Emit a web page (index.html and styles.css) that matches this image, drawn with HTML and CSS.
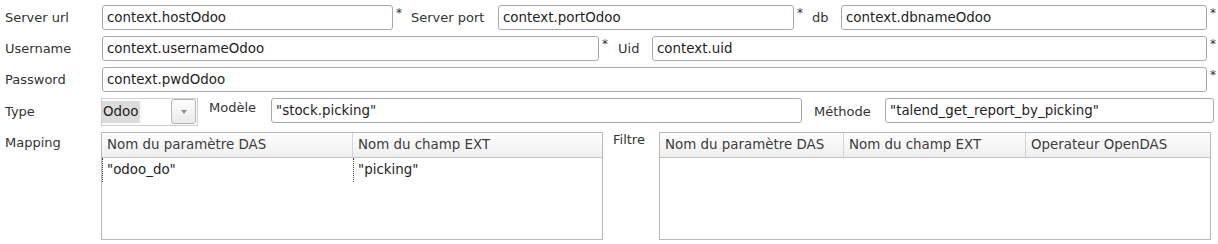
FILE: index.html
```html
<!DOCTYPE html>
<html lang="fr">
	<head>
		<meta charset="UTF-8">
		<title>Odoo connection</title>
		<link rel="stylesheet" href="styles.css">
	</head>
	<body>
		<section class="form">
			<div class="row">
				<span class="label label--first">Server url</span>
				<span class="field w-url">context.hostOdoo</span>
				<span class="req">*</span>
				<span class="label label--port">Server port</span>
				<span class="field w-port">context.portOdoo</span>
				<span class="req">*</span>
				<span class="label label--db">db</span>
				<span class="field w-db">context.dbnameOdoo</span>
				<span class="req">*</span>
			</div>
			<div class="row">
				<span class="label label--first">Username</span>
				<span class="field w-user">context.usernameOdoo</span>
				<span class="req">*</span>
				<span class="label label--uid">Uid</span>
				<span class="field w-uid">context.uid</span>
				<span class="req">*</span>
			</div>
			<div class="row">
				<span class="label label--first">Password</span>
				<span class="field w-pwd">context.pwdOdoo</span>
				<span class="req">*</span>
			</div>
			<div class="row row--type">
				<span class="label label--first">Type</span>
				<div class="combo">
					<span class="combo__value">Odoo</span>
					<span class="combo__btn"><span class="combo__arrow"></span></span>
				</div>
				<span class="label label--model">Modèle</span>
				<span class="field w-model">"stock.picking"</span>
				<span class="label label--method">Méthode</span>
				<span class="field w-method">"talend_get_report_by_picking"</span>
			</div>
			<div class="row row--tables">
				<span class="label label--first label--mapping">Mapping</span>
				<div class="table w-map">
					<div class="table__head">
						<span class="cell c-das">Nom du paramètre DAS</span>
						<span class="cell c-ext">Nom du champ EXT</span>
					</div>
					<div class="table__row">
						<span class="cell c-das dotted">"odoo_do"</span>
						<span class="cell c-ext dotted">"picking"</span>
					</div>
				</div>
				<span class="label label--filter">Filtre</span>
				<div class="table w-filter">
					<div class="table__head">
						<span class="cell f-das">Nom du paramètre DAS</span>
						<span class="cell f-ext">Nom du champ EXT</span>
						<span class="cell f-op">Operateur OpenDAS</span>
					</div>
				</div>
			</div>
		</section>
	</body>
</html>
```

FILE: styles.css
```css
body
{
	margin: 0;
	background: #fff;
	font-family: 'DejaVu Sans', 'Open Sans', sans-serif;
	font-size: 13.4px;
	color: #3c3c3c;
}

.form
{
	padding-top: 5px;
}

.row
{
	display: flex;
	align-items: center;
	height: 25px;
	margin-bottom: 6px;
}

.row > *
{
	flex-shrink: 0;
}

.row--type
{
	height: 29px;
	margin-top: -1px;
	margin-bottom: 6px;
}

.row--tables
{
	align-items: flex-start;
	height: auto;
	margin-top: 1px;
}

.label
{
	white-space: nowrap;
	font-size: 13px;
	color: #333;
}

.label--first
{
	width: 97px;
	padding-left: 5px;
}

.label--mapping
{
	margin-top: 3px;
}

.label--port
{
	margin-left: 6px;
	width: 87px;
}

.label--db
{
	margin-left: 6px;
	width: 29px;
}

.label--uid
{
	margin-left: 7px;
	width: 34px;
}

.label--model
{
	margin-left: 11px;
	width: 62px;
	align-self: flex-start;
	margin-top: 3px;
}

.label--method
{
	margin-left: 12px;
	width: 71px;
}

.label--filter
{
	margin-left: 10px;
	width: 46px;
	margin-top: 0;
}

.field
{
	box-sizing: border-box;
	height: 25px;
	line-height: 23px;
	padding-left: 4px;
	border: 1px solid #a9a9a9;
	border-radius: 3px;
	color: #1e1e1e;
	white-space: nowrap;
	overflow: hidden;
}

.req
{
	width: 12px;
	padding-left: 3px;
	box-sizing: border-box;
	font-size: 12px;
	color: #333;
	align-self: flex-start;
	margin-top: 1px;
}

.w-url { width: 291px; }
.w-port { width: 296px; }
.w-db { width: 366px; }
.w-user { width: 497px; }
.w-uid { width: 555px; }
.w-pwd { width: 1105px; }

.w-model,
.w-method
{
	align-self: flex-start;
	margin-top: 1px;
}

.w-model { width: 531px; }
.w-method { width: 329px; }

.combo
{
	box-sizing: border-box;
	width: 97px;
	height: 28px;
	margin-left: -1px;
	border: 1px solid #d0d0d0;
	display: flex;
	align-items: center;
	justify-content: space-between;
}

.combo__value
{
	background: #dcdcdc;
	color: #1e1e1e;
	line-height: 22px;
	padding: 0 2px 0 1px;
}

.combo__btn
{
	box-sizing: border-box;
	width: 25px;
	height: 25px;
	margin-right: 1px;
	border: 1px solid #b5b5b5;
	border-radius: 3px;
	background: linear-gradient(#fdfdfd, #ebebeb);
	display: flex;
	align-items: center;
	justify-content: center;
}

.combo__arrow
{
	width: 0;
	height: 0;
	border-left: 3px solid transparent;
	border-right: 3px solid transparent;
	border-top: 4px solid #8a8a8a;
	margin-top: 1px;
}

.table
{
	box-sizing: border-box;
	height: 108px;
	border: 1px solid #b9b9b9;
}

.w-map
{
	width: 502px;
	margin-left: -1px;
}

.w-filter
{
	width: 552px;
}

.table__head
{
	display: flex;
	height: 24px;
	background: linear-gradient(#ffffff, #eeeeee);
	border-bottom: 1px solid #c4c4c4;
}

.table__head .cell
{
	border-right: 1px solid #d4d4d4;
}

.table__head .cell:last-child
{
	border-right: none;
	flex: 1;
}

.cell
{
	box-sizing: border-box;
	line-height: 24px;
	padding-left: 5px;
	white-space: nowrap;
	color: #3c3c3c;
}

.table__row
{
	display: flex;
	height: 24px;
}

.table__row .cell
{
	color: #1e1e1e;
}

.dotted
{
	border-left: 1px dotted #444;
	padding-left: 4px;
}

.c-das { width: 251px; }
.c-ext { flex: 1; }
.f-das { width: 184px; }
.f-ext { width: 182px; }
.f-op { flex: 1; }
```
